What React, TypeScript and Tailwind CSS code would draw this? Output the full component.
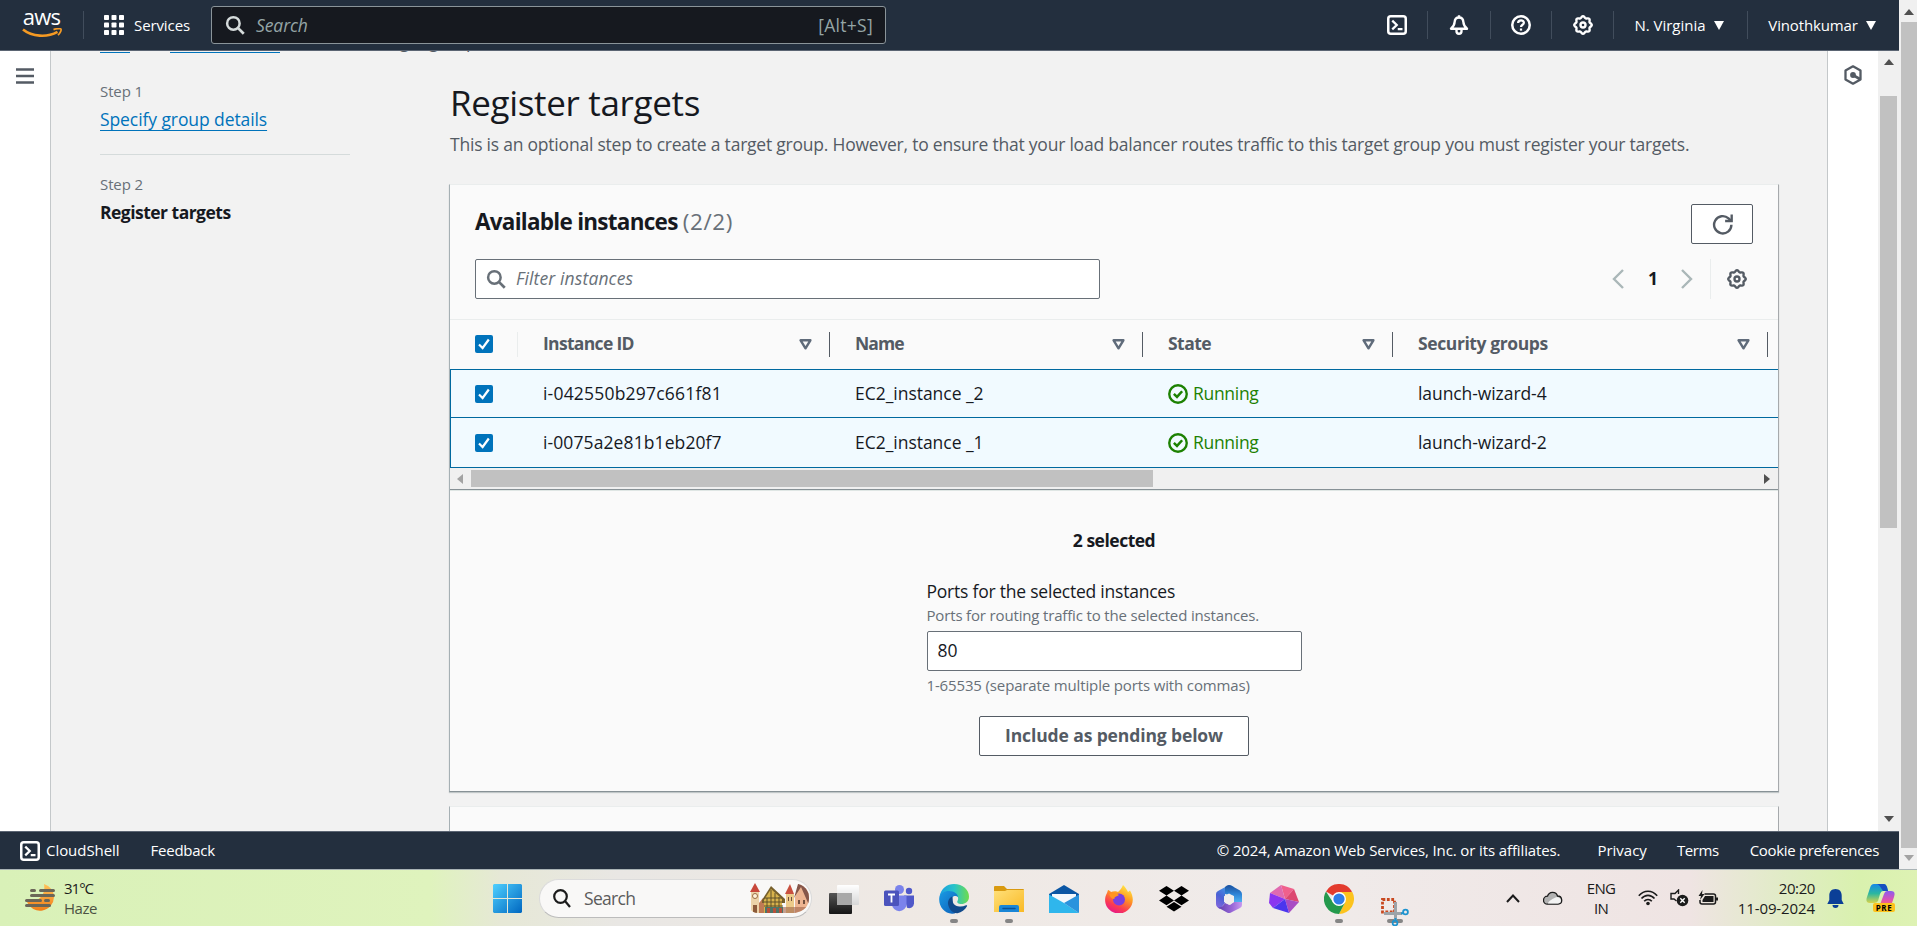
import type { ReactNode } from "react";

/* ---------- console icons (16-unit grid, drawn at 20px) ---------- */

function Icon({ children, className = "size-5" }: { children: ReactNode; className?: string }) {
  return (
    <svg viewBox="0 0 16 16" fill="none" stroke="currentColor" strokeWidth="2" className={`shrink-0 ${className}`}>
      {children}
    </svg>
  );
}

const gearPath = (() => {
  const points: string[] = [];
  for (let i = 0; i < 96; i++) {
    const a = (i / 96) * Math.PI * 2;
    const r = 6.35 + 0.65 * Math.cos(8 * a);
    points.push(`${(8 + r * Math.cos(a)).toFixed(2)} ${(8 + r * Math.sin(a)).toFixed(2)}`);
  }
  return `M${points.join("L")}Z`;
})();

const GearIcon = () => (
  <Icon>
    <path d={gearPath} strokeWidth="1.9" />
    <circle cx="8" cy="8" r="2" strokeWidth="1.9" />
  </Icon>
);

const ShellIcon = () => (
  <Icon>
    <rect x="1" y="1" width="14" height="14" rx="2" />
    <path d="M4.2 4.5 7.8 8l-3.6 3.5M8.6 11.2h3.8" strokeWidth="1.8" />
  </Icon>
);

const BellIcon = () => (
  <Icon>
    <path d="M8 2c-2.3 0-3.4 1.7-3.5 3.6C4.4 8 3.7 9.2 1.6 11H14.4C12.3 9.2 11.6 8 11.5 5.6 11.4 3.7 10.3 2 8 2Z" strokeLinejoin="round" strokeWidth="1.9" />
    <path d="M8 .2V2.5M6 11.5V13c0 2.6 4 2.6 4 0V11.5" strokeWidth="1.9" />
  </Icon>
);

const HelpIcon = () => (
  <Icon>
    <circle cx="8" cy="8" r="7" />
    <path d="M5.7 6.4C5.8 3.7 10.3 3.7 10.3 6.2 10.3 7.8 8 7.8 8 9.6" strokeWidth="1.8" />
    <path d="M8 10.8v1.7" strokeWidth="1.8" />
  </Icon>
);

const SearchIcon = ({ className = "size-5" }: { className?: string }) => (
  <Icon className={className}>
    <circle cx="6.7" cy="6.7" r="5" />
    <path d="M10.3 10.3 15 15" strokeWidth="2.2" />
  </Icon>
);

const RefreshIcon = () => (
  <Icon className="size-[21px]">
    <path d="M14.8 8.2A6.6 6.6 0 1 1 12.6 3.3L14.2 4.9" strokeWidth="1.8" />
    <path d="M15 .4V5.3H10" strokeWidth="1.8" />
  </Icon>
);

const SuccessIcon = () => (
  <Icon>
    <circle cx="8" cy="8" r="7" strokeWidth="1.9" />
    <path d="M4.7 7.9 7.2 10.3 11.3 5.8" strokeWidth="2" />
  </Icon>
);

const HexIcon = () => (
  <svg viewBox="0 0 18 20" className="h-5 w-[18px] text-[#545b64]" fill="none" stroke="currentColor" strokeWidth="2.3">
    <path d="M9 1.3 16.5 5.6V14.4L9 18.7 1.5 14.4V5.6Z" strokeLinejoin="round" />
    <circle cx="9" cy="10" r="2.9" fill="currentColor" stroke="none" />
    <path d="M9.5 10.4 15.8 14" strokeWidth="2.8" />
  </svg>
);

const MenuIcon = () => (
  <svg viewBox="0 0 18 16" className="h-4 w-[18px]" stroke="#545b64" strokeWidth="2.4">
    <path d="M0 1.5H18M0 8H18M0 14.5H18" />
  </svg>
);

const Down = ({ className }: { className: string }) => (
  <svg viewBox="0 0 10 9" className={`h-[9px] w-[10px] ${className}`} fill="currentColor">
    <path d="M0 0H10L5 9Z" />
  </svg>
);

const SortIcon = () => (
  <svg viewBox="0 0 13 11" className="h-[11px] w-[13px] text-[#5f6b7a]" fill="none" stroke="currentColor" strokeWidth="2.4">
    <path d="M1.6 1.3H11.4L6.5 9.3Z" strokeLinejoin="round" />
  </svg>
);

const AwsLogo = () => (
  <div className="flex w-[40px] flex-col items-center">
    <span className="h-[17px] text-[22px] leading-[11px] tracking-[-0.7px] text-white">aws</span>
    <svg viewBox="0 0 40 11" className="h-[11px] w-10" fill="none" stroke="#f59a23">
      <path d="M1 1.5C10 8.8 25 9.8 35.5 3.8" strokeWidth="2.6" />
      <path d="M31.5 1.6C34.5.4 38.5.3 39 1.2S38 5.5 36 7.2" strokeWidth="1.7" />
    </svg>
  </div>
);

/* ---------- console chrome ---------- */

const HeaderCell = ({ width, children }: { width: string; children: ReactNode }) => (
  <div className={`flex h-7 items-center justify-center border-l border-[#414d5c] ${width}`}>{children}</div>
);

function Header() {
  return (
    <header className="flex h-[51px] shrink-0 items-center border-b border-[#5b6573] bg-[#232f3e] text-[15px] font-medium text-white">
      <div className="flex w-[83px] justify-center">
        <AwsLogo />
      </div>
      <div className="flex h-7 w-[128px] items-center border-l border-[#414d5c] pl-5">
        <svg viewBox="0 0 20 20" className="size-5" fill="#fff">
          {[0, 7.5, 15].map((y) => [0, 7.5, 15].map((x) => <rect key={`${x}-${y}`} x={x} y={y} width="5" height="5" rx=".8" />))}
        </svg>
        <span className="ml-[10px] tracking-[-0.1px]">Services</span>
      </div>
      <div className="flex h-[38px] w-[675px] items-center rounded-[3px] border border-[#8a9499] bg-[#16191f] pl-[13px] pr-3 text-[17.5px] font-normal text-[#95a5a6]">
        <SearchIcon className="size-5 text-[#d5dbdb]" />
        <span className="ml-[11px] italic tracking-[-0.1px]">Search</span>
        <span className="ml-auto tracking-[0.3px]">[Alt+S]</span>
      </div>
      <div className="ml-auto flex items-center">
        <div className="flex w-[60px] items-center justify-center"><ShellIcon /></div>
        <HeaderCell width="w-[63px]"><BellIcon /></HeaderCell>
        <HeaderCell width="w-[61px]"><HelpIcon /></HeaderCell>
        <HeaderCell width="w-[62px]"><GearIcon /></HeaderCell>
        <HeaderCell width="w-[134px]">
          <span className="-ml-[3px] mr-2">N. Virginia</span>
          <Down className="text-white" />
        </HeaderCell>
        <HeaderCell width="w-[152px]">
          <span className="-ml-[3px] mr-2 tracking-[-0.15px]">Vinothkumar</span>
          <Down className="text-white" />
        </HeaderCell>
      </div>
    </header>
  );
}

function Footer() {
  return (
    <footer className="flex h-[38px] shrink-0 items-center border-t border-[#5b6573] bg-[#232f3e] pl-5 pr-5 text-[15px] font-medium text-white">
      <ShellIcon />
      <span className="ml-[6px] tracking-[-0.05px]">CloudShell</span>
      <span className="ml-[31px] tracking-[-0.25px]">Feedback</span>
      <span className="ml-auto tracking-[-0.12px]">© 2024, Amazon Web Services, Inc. or its affiliates.</span>
      <span className="ml-[37px]">Privacy</span>
      <span className="ml-[30px] tracking-[-0.4px]">Terms</span>
      <span className="ml-[31px] tracking-[-0.33px]">Cookie preferences</span>
    </footer>
  );
}

function Steps() {
  return (
    <aside className="w-[250px] shrink-0 overflow-visible">
      <div className="-mt-[24px] flex h-7 items-start text-[17.5px] leading-7 text-[#0073bb]">
        <span className="w-[30px] shrink-0 border-b border-[#0073bb] leading-[25px] tracking-[-0.7px]">EC2</span>
        <span className="w-10 shrink-0 text-center text-[#687078]">›</span>
        <span className="w-[110px] shrink-0 border-b border-[#0073bb] leading-[25px] tracking-[-0.2px]">Target groups</span>
        <span className="w-10 shrink-0 text-center text-[#687078]">›</span>
        <span className="shrink-0 tracking-[-0.2px] text-[#545b64]">Create target group</span>
      </div>
      <div className="mt-[26px] text-[15px] leading-5 tracking-[-0.1px] text-[#687078]">Step 1</div>
      <div className="mt-1 text-[17.5px] leading-7 tracking-[-0.09px] text-[#0073bb]">
        <a className="underline decoration-1 underline-offset-[4px]">Specify group details</a>
      </div>
      <div className="mt-[21px] border-t border-[#d5dbdb]" />
      <div className="mt-[19px] text-[15px] leading-5 tracking-[-0.1px] text-[#687078]">Step 2</div>
      <div className="mt-1 text-[17.5px] font-bold leading-7 tracking-[-0.52px] text-[#16191f]">Register targets</div>
    </aside>
  );
}

/* ---------- instances table ---------- */

const Checkbox = () => (
  <div className="flex size-[18px] items-center justify-center rounded-[2px] bg-[#0073bb]">
    <svg viewBox="0 0 14 14" className="size-[14px]" fill="none" stroke="#fff" strokeWidth="2.2">
      <path d="M2 7.5 5.6 11 11.8 2.5" />
    </svg>
  </div>
);

const columns = [
  { label: "Instance ID", width: "w-[312px]", text: "tracking-[-0.68px]" },
  { label: "Name", width: "w-[313px]", text: "tracking-[-0.95px]" },
  { label: "State", width: "w-[250px]", text: "tracking-[-0.55px]" },
  { label: "Security groups", width: "w-[375px]", text: "tracking-[-0.4px]" },
];

const instances = [
  { id: "i-042550b297c661f81", name: "EC2_instance _2", group: "launch-wizard-4", row: "h-[47px] border-t border-b", idText: "tracking-[0.2px]" },
  { id: "i-0075a2e81b1eb20f7", name: "EC2_instance _1", group: "launch-wizard-2", row: "h-[49px] border-b", idText: "tracking-[0.1px]" },
];

function InstanceTable() {
  return (
    <div>
      <div className="flex h-[50px] items-center border-t border-[#eaeded] pb-px pl-[25px] font-bold leading-[23px] text-[#545b64]">
        <Checkbox />
        <div className="ml-6 h-[25px] border-l border-[#eaeded]" />
        {columns.map((c) => (
          <div key={c.label} className={`flex h-[25px] items-center justify-between border-r border-[#545b64] pl-[25px] pr-[17px] ${c.width}`}>
            <span className={`-mt-[2px] ${c.text}`}>{c.label}</span>
            <SortIcon />
          </div>
        ))}
      </div>
      {instances.map((i) => (
        <div key={i.id} className={`box-content flex items-center border-l border-[#00699f] bg-[#f1faff] pl-6 leading-[24px] text-[#16191f] ${i.row}`}>
          <Checkbox />
          <span className={`-mt-[2px] ml-[50px] w-[312px] ${i.idText}`}>{i.id}</span>
          <span className="-mt-[2px] w-[313px] tracking-[-0.03px]">{i.name}</span>
          <span className="flex w-[250px] items-center gap-[5px] tracking-[-0.3px] text-[#1d8102]">
            <SuccessIcon />
            <span className="-mt-[2px]">Running</span>
          </span>
          <span className="-mt-[2px] tracking-[-0.08px]">{i.group}</span>
        </div>
      ))}
      <div className="flex h-[21px] items-center bg-[#f0f0f0] pr-2">
        <svg viewBox="0 0 6 10" className="ml-[7px] h-[10px] w-[6px]" fill="#a3a3a3"><path d="M6 0V10L0 5Z" /></svg>
        <div className="ml-2 h-[17px] w-[682px] bg-[#c1c1c1]" />
        <svg viewBox="0 0 6 10" className="ml-auto h-[10px] w-[6px]" fill="#505050"><path d="M0 0V10L6 5Z" /></svg>
      </div>
    </div>
  );
}

const Chevron = ({ d }: { d: string }) => (
  <svg viewBox="0 0 12 20" className="h-5 w-3" fill="none" stroke="#aab7b8" strokeWidth="2.4"><path d={d} /></svg>
);

function InstancesPanel() {
  return (
    <section className="-ml-px w-[1330px] border-x border-b border-t border-b-[#879196] border-l-[#a6b0b4] border-r-[#a6a9ac] border-t-[#eaeded] bg-[#fafafa] text-[17.5px] shadow-[0_1px_1px_rgba(0,28,36,0.2)]">
      <div className="flex h-[74px] items-start pl-[25px] pr-[25px] pt-[19px]">
        <h2 className="mt-[3px] text-[22.5px] font-bold leading-[30px] tracking-[-0.73px] text-[#16191f]">
          Available instances <span className="font-normal tracking-[0.6px] text-[#687078]">(2/2)</span>
        </h2>
        <button className="ml-auto flex h-10 w-[62px] items-center justify-center rounded-[2px] border border-[#545b64] bg-white text-[#545b64]">
          <RefreshIcon />
        </button>
      </div>
      <div className="flex h-[60px] items-start pl-[25px] pr-[31px]">
        <div className="flex h-10 w-[625px] items-center rounded-[2px] border border-[#687078] bg-white pl-[10px] text-[#687078]">
          <SearchIcon />
          <span className="-mt-[2px] ml-[10px] italic leading-[23px] tracking-[0.13px]">Filter instances</span>
        </div>
        <div className="ml-auto flex h-10 items-center">
          <Chevron d="M11 1 2 10 11 19" />
          <span className="ml-[24px] mr-[23px] -mt-px text-[17.5px] font-bold text-[#16191f]">1</span>
          <Chevron d="M1 1 10 10 1 19" />
          <div className="ml-[17px] flex h-10 items-center border-l border-[#eaeded] pl-4 text-[#545b64]">
            <GearIcon />
          </div>
        </div>
      </div>
      <InstanceTable />
      <div className="flex flex-col items-center border-t border-[#879196] text-[#16191f] shadow-[inset_0_1px_0_#dfe6e4]">
        <div className="mt-[36px] font-bold leading-7 tracking-[-0.5px]">2 selected</div>
        <div className="mt-[23px] w-[375px]">
          <div className="leading-7 tracking-[-0.22px]">Ports for the selected instances</div>
          <div className="text-[15px] leading-5 tracking-[-0.16px] text-[#687078]">Ports for routing traffic to the selected instances.</div>
          <div className="mt-[6px] flex h-10 items-center rounded-[2px] border border-[#687078] bg-white px-[10px] pb-px">80</div>
          <div className="mt-[4px] text-[15px] leading-5 tracking-[-0.14px] text-[#687078]">1-65535 (separate multiple ports with commas)</div>
        </div>
        <button className="mb-[35px] mt-[21px] flex h-10 w-[270px] items-center justify-center rounded-[2px] border border-[#545b64] bg-white pb-[2px] font-bold tracking-[-0.12px] text-[#545b64]">
          Include as pending below
        </button>
      </div>
    </section>
  );
}

/* ---------- scrollbars ---------- */

const Arrow = ({ up, color }: { up?: boolean; color: string }) => (
  <svg viewBox="0 0 10 6" className={`h-[6px] w-[10px] ${color}`} fill="currentColor">
    <path d={up ? "M0 6H10L5 0Z" : "M0 0H10L5 6Z"} />
  </svg>
);

/* ---------- taskbar ---------- */

const HazeIcon = () => (
  <svg viewBox="0 0 30 30" className="h-[30px] w-[30px]" fill="none">
    <defs><linearGradient id="haze" x2="0" y2="1"><stop stopColor="#ffc35a" /><stop offset="1" stopColor="#f27d16" /></linearGradient></defs>
    <path d="M19 1C25 3 29 8 29 14a14 14 0 0 1-27 5C14 19 21 12 19 1Z" fill="url(#haze)" />
    <path d="M6.5 7.5h3M15.5 7.5h13M6.5 12.5h22M1.5 17.5h14M20.5 17.5h3M1.5 22.5h23" stroke="#6b6658" strokeWidth="3" strokeLinecap="round" />
  </svg>
);

const WindowsIcon = () => (
  <svg viewBox="0 0 29 29" className="size-[29px]">
    <defs><linearGradient id="win" x2="1" y2="1"><stop stopColor="#4fd0ff" /><stop offset="1" stopColor="#0067c0" /></linearGradient></defs>
    <path d="M1 0H14V14H0V1ZM15 0H28L29 1V14H15ZM0 15H14V29H1L0 28ZM15 15H29V28L28 29H15Z" fill="url(#win)" />
  </svg>
);

const VillageArt = () => (
  <svg viewBox="0 0 60 30" className="h-[30px] w-[60px]">
    <defs><clipPath id="pill"><path d="M1 0H46Q60 3 60 15Q60 27 46 30H10Q2 30 1 25Z" /></clipPath></defs>
    <g clipPath="url(#pill)">
      <path d="M2 9H10V30H2Z" fill="#ecd3a8" />
      <path d="M1 9 6 0 11 9Z" fill="#c8473a" />
      <circle cx="6" cy="13" r="2.5" fill="#fff3da" stroke="#9a6b43" />
      <path d="M4 22h4v8H4z" fill="#8c5b3a" />
      <path d="M10 20 14 15H18V30H10Z" fill="#c07a55" />
      <path d="M37 11H45V30H37Z" fill="#ecca8a" />
      <path d="M36 11 41 1 45 11Z" fill="#c8503f" />
      <path d="M13 17 22 3 36 16V20H13Z" fill="#77602c" />
      <path d="M15 17 22 6 33 16V30H15Z" fill="#d8b34c" />
      <path d="M15 15H33M15 19H34M15 23H34M18 15V30M22 7V30M26 10V30M30 14V30" stroke="#5e512a" />
      <path d="M16 24h18v6H16z" fill="#4d7568" />
      <path d="M18 25h3v5h-3zM24 25h3v5h-3zM30 25h3v5h-3z" fill="#b8503a" />
      <path d="M46 14 52 0 60 6V30H46Z" fill="#edb491" />
      <path d="M45 15 49 1 54 0 60 8V22L52 4Z" fill="#85564a" />
      <path d="M49 17h2v4h-2zM54 17h2v4h-2zM39 14h1v4h-1zM42 14h1v4h-1z" fill="#71503f" />
      <path d="M34 24H60V30H34Z" fill="#a0644a" opacity=".6" />
    </g>
  </svg>
);

const TaskViewIcon = () => (
  <svg viewBox="0 0 30 29" className="h-[29px] w-[30px]">
    <defs>
      <linearGradient id="tv" x2="0" y2="1"><stop stopColor="#555" /><stop offset="1" stopColor="#151515" /></linearGradient>
      <linearGradient id="tw" x2="0" y2="1"><stop stopColor="#fff" /><stop offset="1" stopColor="#d7d7d7" /></linearGradient>
    </defs>
    <rect y="8" width="23" height="21" rx="1" fill="url(#tv)" />
    <rect x="8" y="0" width="22" height="20" rx="1" fill="url(#tw)" />
    <rect x="8" y="8" width="15" height="12" fill="#a9a9a9" />
  </svg>
);

const TeamsIcon = () => (
  <svg viewBox="0 0 30 28" className="h-7 w-[30px]">
    <circle cx="25" cy="6" r="3.2" fill="#5059c9" />
    <circle cx="15.5" cy="4.5" r="4.5" fill="#7b83eb" />
    <path d="M20 10.5H30V18.5a5 5 0 0 1-7 4.3Z" fill="#5059c9" />
    <path d="M8 10.5H22.5V19a7.2 7.2 0 0 1-14.5 0Z" fill="#7b83eb" />
    <rect y="5.5" width="15" height="15.5" rx="1.5" fill="#4b53bc" />
    <path d="M4 9.5H11M7.5 9.5V17.5" stroke="#fff" strokeWidth="1.8" />
  </svg>
);

const EdgeIcon = () => (
  <svg viewBox="0 0 30 30" className="size-[30px]">
    <defs>
      <linearGradient id="e1" x2="1"><stop stopColor="#1b9de2" /><stop offset=".5" stopColor="#28c3c9" /><stop offset="1" stopColor="#6fdc4c" /></linearGradient>
      <linearGradient id="e2" x2="1" y2="1"><stop stopColor="#1b9be4" /><stop offset="1" stopColor="#0b5bb5" /></linearGradient>
    </defs>
    <path d="M.5 13C2 4 8 0 15 0c9 0 15 6 15 12.5C30 18 26 20 22.5 20c-3.5 0-5-1.5-4-3 2-3-.5-7.500-5.500-7.500C7 9.5 1 11 .5 13Z" fill="url(#e1)" />
    <path d="M.3 13.5C1 9.5 5.5 7 10 7c5 0 9 3 9 6-3-2.500-7 0-7 4 0 5 6 8 10 7-3 4-6 6-9 5.800C5 29-.7 22 .3 13.5Z" fill="url(#e2)" />
    <path d="M13 12.5c-3 1.500-5 5-3.500 9.500 1.500 4.500 5 7.500 9 7.200 4-1 7.500-3.500 9.500-7 .5-1-.5-1.200-1-.9C21.5 24 15 22 14 18.5 13.5 16 14 13 13 12.5Z" fill="#114a8b" />
  </svg>
);

const FolderIcon = () => (
  <svg viewBox="0 0 30 26" className="h-[26px] w-[30px]">
    <defs><linearGradient id="fo" x2="1" y2="1"><stop stopColor="#ffe07a" /><stop offset="1" stopColor="#f9b924" /></linearGradient></defs>
    <path d="M0 1Q0 0 1 0H10L13 3H29Q30 3 30 4V10H0Z" fill="#d99a10" />
    <path d="M0 5H11L13 4H30V26H0Z" fill="url(#fo)" />
    <path d="M5 26V21Q5 19 7 19H23Q25 19 25 21V26Z" fill="#1a86d6" />
    <path d="M9 22.5H21" stroke="#0b5196" strokeWidth="1.5" strokeLinecap="round" />
  </svg>
);

const MailIcon = () => (
  <svg viewBox="0 0 30 28" className="h-7 w-[30px]">
    <path d="M0 9 15 0 30 9V16H0Z" fill="#0b56a4" />
    <path d="M3 9H27V14L15 20 3 14Z" fill="#f4f8fc" />
    <path d="M0 9.5 15 18 30 28H0Z" fill="#2fb6ec" />
    <path d="M30 9.5V28L15 18Z" fill="#2a93dd" />
  </svg>
);

const FirefoxIcon = () => (
  <svg viewBox="0 0 28 28" className="size-7">
    <defs><linearGradient id="ff" x1=".8" x2=".3" y2="1"><stop stopColor="#fff04a" /><stop offset=".4" stopColor="#ff9a22" /><stop offset=".75" stopColor="#fb3a52" /><stop offset="1" stopColor="#e5178c" /></linearGradient></defs>
    <path d="M18 0C21 3 22 5 23 7L25 5.5C29 12 29 20 23 25A14 14 0 0 1 2 22C-1 17 0 11 2 8L3 5C4 5 5 6 6 7 8 6 12 6 13 7 15 5 17 3 18 0Z" fill="url(#ff)" />
    <circle cx="14" cy="14.5" r="6" fill="#7a3fe0" />
    <path d="M4 9C8 7 12 8 14 10 12 12 9 11 9.5 14 7 14 5 12 4 9Z" fill="#ff9520" />
  </svg>
);

const DropboxIcon = () => (
  <svg viewBox="0 0 30 26" className="h-[26px] w-[30px]">
    <path d="M7.5 0 15 4.8 7.5 9.6 0 4.8ZM22.5 0 30 4.8 22.5 9.6 15 4.8ZM7.5 9.6 15 14.4 7.5 19.2 0 14.4ZM22.5 9.6 30 14.4 22.5 19.2 15 14.4ZM15 16 22.5 20.8 15 25.6 7.5 20.8Z" fill="#000" />
  </svg>
);

const OfficeIcon = () => (
  <svg viewBox="0 0 26 28" className="h-7 w-[26px]">
    <defs>
      <linearGradient id="o1" x1=".6" x2="0" y2="1"><stop stopColor="#3fa0ea" /><stop offset=".5" stopColor="#4a62d4" /><stop offset="1" stopColor="#8d68e0" /></linearGradient>
      <linearGradient id="o2" x2="1"><stop stopColor="#5d3fae" /><stop offset=".6" stopColor="#9a68d8" /><stop offset="1" stopColor="#c79af0" /></linearGradient>
      <linearGradient id="o3" x2="0" y2="1"><stop stopColor="#1c4f9c" /><stop offset=".5" stopColor="#2f86d8" /><stop offset="1" stopColor="#58bdf6" /></linearGradient>
    </defs>
    <path d="M13 0Q15 0 18 2L9 9V18L4 24Q0 22 0 19V9Q0 7 2 6Z" fill="url(#o1)" />
    <path d="M11 .5Q13-.5 15 .5L24 5.5Q26 7 26 9V19L18 17V11L9 9V2Z" fill="url(#o3)" />
    <path d="M26 17V20Q26 22 24 23L15 27.5Q13 28.5 11 27.5L2 22.5Q6 23 9 18L14 20 18 17Z" fill="url(#o2)" />
    <path d="M13 8.5 18 11.3V17L13 19.8 8 17V11.3Z" fill="#f1eeec" />
  </svg>
);

const GemIcon = () => (
  <svg viewBox="0 0 30 28" className="h-7 w-[30px]">
    <path d="M12 0 25 4 16 14Z" fill="#f0608c" />
    <path d="M12 0 16 14 1 8Z" fill="#e06ab0" />
    <path d="M25 4 30 17 16 14Z" fill="#dc4870" />
    <path d="M30 17 20 28 16 14Z" fill="#a94cc4" />
    <path d="M1 8 16 14 4 23 0 18Z" fill="#8a35f0" />
    <path d="M4 23 16 14 20 28Z" fill="#4b35ee" />
  </svg>
);

const ChromeIcon = () => (
  <svg viewBox="0 0 30 30" className="size-[30px]">
    <path d="M15 15 2 7.5A15 15 0 0 1 28 7.5Z" fill="#e33b2e" />
    <path d="M15 8H28.3A15 15 0 0 1 15 30L21 18.5Z" fill="#fcc31e" />
    <path d="M2 7.5A15 15 0 0 0 15 30L21 18.5 9 18.5Z" fill="#24994c" />
    <circle cx="15" cy="15" r="7" fill="#fff" />
    <circle cx="15" cy="15" r="5.6" fill="#2f7de8" />
  </svg>
);

const SnipIcon = () => (
  <svg viewBox="0 0 28 28" className="h-7 w-7" fill="none">
    <rect x="1.5" y="1.5" width="12" height="12.5" stroke="#c8481f" strokeWidth="2.8" strokeDasharray="2.8 1.6" />
    <path d="M14.5 4V22M3 15.5H21" stroke="#9da3a8" strokeWidth="3" />
    <circle cx="14" cy="25" r="2.4" stroke="#1e93cf" strokeWidth="1.8" />
    <circle cx="24.5" cy="14" r="2.4" stroke="#1e93cf" strokeWidth="1.8" />
    <path d="M14.5 20V23M20 15.5 22.5 15" stroke="#1e93cf" strokeWidth="2" />
  </svg>
);

const CopilotIcon = () => (
  <div className="relative h-7 w-[29px]">
    <svg viewBox="0 0 29 26" className="h-[26px] w-[29px]">
      <defs>
        <linearGradient id="c1" x2="0" y2="1"><stop stopColor="#1788e8" /><stop offset=".5" stopColor="#2bb7a0" /><stop offset="1" stopColor="#d8d44a" /></linearGradient>
        <linearGradient id="c2" x2="0" y2="1"><stop stopColor="#8a5cf0" /><stop offset=".5" stopColor="#e052b0" /><stop offset="1" stopColor="#f58a4a" /></linearGradient>
      </defs>
      <path d="M8 0H18Q20 0 21 3L22 7H17Q15 7 14 10L12 17Q11 19 8 19H4Q-1 19 1 13L4 4Q5 0 8 0Z" fill="url(#c1)" />
      <path d="M21 7H25Q30 7 28 13L25 22Q24 25 21 25H12L15 18 18 10Q19 7 21 7Z" fill="url(#c2)" />
      <path d="M10 0H18Q20 0 21 3L22 7H17L15 4Q13 0 10 0Z" fill="#1650c0" />
    </svg>
    <span className="absolute left-[7px] top-[19px] flex h-[9px] w-[22px] items-center justify-center rounded-[2px] bg-[#fdc21c] text-[8px] font-bold leading-none tracking-[0.6px] text-black">PRE</span>
  </div>
);

const apps = [
  { key: "view", icon: <TaskViewIcon />, dot: "" },
  { key: "teams", icon: <TeamsIcon />, dot: "" },
  { key: "edge", icon: <EdgeIcon />, dot: "w-2" },
  { key: "files", icon: <FolderIcon />, dot: "w-2" },
  { key: "mail", icon: <MailIcon />, dot: "" },
  { key: "firefox", icon: <FirefoxIcon />, dot: "" },
  { key: "dropbox", icon: <DropboxIcon />, dot: "" },
  { key: "office", icon: <OfficeIcon />, dot: "" },
  { key: "gem", icon: <GemIcon />, dot: "" },
  { key: "chrome", icon: <ChromeIcon />, dot: "w-2" },
];

function Taskbar() {
  return (
    <div className="flex h-[57px] shrink-0 items-center border-t border-[#a9b3b5] bg-[linear-gradient(90deg,#d9f1b8_0,#dff3bd_430px,#e6e8d6_500px,#e9e7e4_620px,#efe9e4_900px,#f0ebea_1300px,#efe4e3_1690px,#e0ecc4_1790px,#d9f1ae_1860px,#def2b4_1917px)] text-[15px] text-[#1b1b1b]">
      <div className="flex w-[493px] items-center pl-[25px]">
        <HazeIcon />
        <div className="ml-[9px] leading-5">
          <div className="tracking-[-1px]">31°C</div>
          <div className="tracking-[-0.45px] text-[#4c5243]">Haze</div>
        </div>
      </div>
      <WindowsIcon />
      <div className="ml-[17px] flex h-[39px] w-[273px] items-center rounded-full border border-b-[#bcbcbc] border-x-[#dadada] border-t-[#dcdcdc] bg-[#f9f8f7] pl-[13px] pr-[2px]">
        <svg viewBox="0 0 18 19" className="h-[19px] w-[18px]" fill="none" stroke="#1b1b1b" strokeWidth="2.2">
          <circle cx="7.5" cy="7.5" r="6.3" />
          <path d="M12 12 17 18" />
        </svg>
        <span className="ml-[13px] text-[17.5px] tracking-[-0.7px] text-[#5c5c5c]">Search</span>
        <div className="ml-auto"><VillageArt /></div>
      </div>
      <div className="ml-1 flex">
        {apps.map((a) => (
          <div key={a.key} className="flex h-14 w-[55px] flex-col items-center">
            <div className="mt-[13px] flex h-[32px] items-center">{a.icon}</div>
            {a.dot && <div className={`mt-[4px] h-[4px] rounded-full bg-[#858585] ${a.dot}`} />}
          </div>
        ))}
        <div className="relative flex h-14 w-[57px] flex-col items-center justify-end">
          <div className="mb-[3px] h-[4px] w-4 rounded-full bg-[#858585]" />
          <div className="absolute bottom-0 left-[15px]"><SnipIcon /></div>
        </div>
      </div>
      <div className="ml-auto flex items-center pr-[22px]">
        <svg viewBox="0 0 14 9" className="h-[9px] w-[14px]" fill="none" stroke="#1b1b1b" strokeWidth="2"><path d="M1 8 7 1.5 13 8" /></svg>
        <svg viewBox="0 0 20 14" className="ml-[23px] h-[14px] w-5" stroke="#1b1b1b" strokeWidth="1.3">
          <path d="M4.5 13.2a4 4 0 0 1 0-8C6 .2 13 0 14.5 5c5 0 6 7.5.5 8.2Z" fill="#b2b2b2" />
          <path d="M5 12.5C5 10 10 7.5 14 6c5 1 5 6 1 6.5Z" fill="#f3f3f3" stroke="none" />
        </svg>
        <div className="ml-[22px] w-[32px] text-center leading-5 tracking-[-0.7px]">
          <div>ENG</div>
          <div>IN</div>
        </div>
        <svg viewBox="0 0 20 16" className="ml-[21px] h-4 w-5" fill="none" stroke="#1b1b1b" strokeWidth="1.6">
          <path d="M.8 5.8C6-.3 14-.3 19.2 5.8M3.500 8.6c3.7-4.3 9.3-4.3 13 0M6.200 11.3c2-2.500 5.600-2.500 7.600 0" />
          <circle cx="10" cy="13.5" r="1.8" fill="#1b1b1b" stroke="none" />
        </svg>
        <svg viewBox="0 0 19 18" className="ml-3 h-[18px] w-[19px]" fill="none" stroke="#1b1b1b" strokeWidth="1.4">
          <path d="M8.5 5V1L5 4.5H1V10H4L6.5 12" />
          <circle cx="12.5" cy="11.5" r="5.8" fill="#1b1b1b" stroke="none" />
          <path d="M10.3 9.3 14.7 13.7M14.7 9.3 10.3 13.7" stroke="#fff" />
        </svg>
        <svg viewBox="0 0 20 17" className="ml-[9px] h-[17px] w-5" fill="none" stroke="#1b1b1b" strokeWidth="1.5">
          <path d="M6.5 4H15.5a2 2 0 0 1 2 2V12a2 2 0 0 1-2 2H4a2 2 0 0 1-2-2V10" />
          <path d="M7 6H15.5V12H4.5V10Z" fill="#1b1b1b" stroke="none" />
          <path d="M18 7.5h2v3h-2zM4.5 0 .5 6H3L2 10 6.5 4H4Z" fill="#1b1b1b" stroke="none" />
        </svg>
        <div className="ml-[19px] w-[78px] text-right leading-5">
          <div className="tracking-[-0.4px]">20:20</div>
          <div className="tracking-[-0.1px]">11-09-2024</div>
        </div>
        <svg viewBox="0 0 17 19" className="ml-[12px] h-[19px] w-[17px]" fill="#0b3f97">
          <path d="M8.5 0C4.5 0 2.3 2.8 2.3 6.5V11L.3 15H16.7L14.7 11V6.5C14.7 2.8 12.5 0 8.5 0ZM5.5 16H11.5a3 3 0 0 1-6 0Z" />
        </svg>
        <div className="ml-[22px]"><CopilotIcon /></div>
      </div>
    </div>
  );
}

export default function App() {
  return (
    <div className="flex h-[926px] w-[1917px] flex-col overflow-hidden whitespace-nowrap font-['Open_Sans',sans-serif]">
      <div className="flex h-[869px] shrink-0">
        <div className="flex w-[1899px] flex-col">
          <Header />
          <div className="flex h-[780px]">
            <nav className="flex w-[51px] shrink-0 justify-center border-r border-[#c4c8ca] bg-white pt-[17px]">
              <MenuIcon />
            </nav>
            <main className="flex w-[1776px] shrink-0 overflow-hidden bg-[#f2f2f2] pl-[49px]">
              <Steps />
              <div className="ml-[100px] w-[1330px] shrink-0">
                <h1 className="mt-[29px] text-[35px] leading-[45px] tracking-[-0.33px] text-[#16191f]">Register targets</h1>
                <p className="mt-[5px] text-[17.5px] leading-7 tracking-[-0.22px] text-[#545b64]">
                  This is an optional step to create a target group. However, to ensure that your load balancer routes traffic to this target group you must register your targets.
                </p>
                <div className="mt-[26px]">
                  <InstancesPanel />
                </div>
                <div className="-ml-px mt-[14px] h-20 w-[1330px] border border-l-[#a6b0b4] border-r-[#a6a9ac] border-t-[#eaeded] bg-[#fafafa]" />
              </div>
            </main>
            <div className="flex w-[51px] shrink-0 justify-center border-l border-[#c4c8ca] bg-white pt-[14px]">
              <HexIcon />
            </div>
            <div className="flex w-[21px] flex-col items-center bg-[#f0f0f0]">
              <div className="mt-2"><Arrow up color="text-[#505050]" /></div>
              <div className="mt-[31px] h-[432px] w-[17px] bg-[#c1c1c1]" />
              <div className="mb-[9px] mt-auto"><Arrow color="text-[#505050]" /></div>
            </div>
          </div>
          <Footer />
        </div>
        <div className="flex w-[18px] flex-col items-center bg-[#f0f0f0] pl-[2px]">
          <div className="mt-[9px]"><Arrow up color="text-[#505050]" /></div>
          <div className="mt-[7px] h-[826px] w-4 bg-[#c1c1c1]" />
          <div className="mt-[7px]"><Arrow color="text-[#a3a3a3]" /></div>
        </div>
      </div>
      <Taskbar />
    </div>
  );
}
